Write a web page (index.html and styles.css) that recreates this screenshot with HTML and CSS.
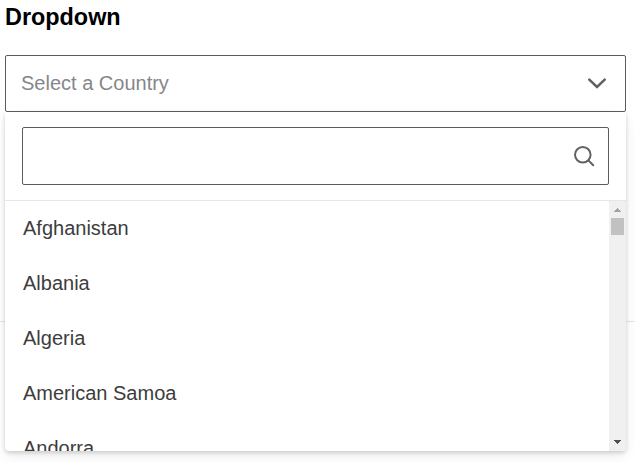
FILE: index.html
```html
<!DOCTYPE html>
<html lang="en">
<head>
<meta charset="utf-8">
<title>Dropdown</title>
<link rel="stylesheet" href="styles.css">
</head>
<body>
<main class="demo">
  <h2 class="title">Dropdown</h2>
  <div class="dropdown">
    <div class="field">
      <span>Select a Country</span>
      <svg class="chevron" width="20" height="12" viewBox="0 0 20 12"><path d="M2.3 1.6L10 9l7.7-7.4"/></svg>
    </div>
    <div class="menu">
      <div class="search-area">
        <div class="search">
          <svg class="magnifier" width="22" height="22" viewBox="0 0 22 22"><circle cx="9.8" cy="9.8" r="7.8"/><path d="M15.4 15.4l4.8 4.8"/></svg>
        </div>
      </div>
      <div class="list">
        <ul class="options">
          <li>Afghanistan</li>
          <li>Albania</li>
          <li>Algeria</li>
          <li>American Samoa</li>
          <li>Andorra</li>
        </ul>
        <div class="scrollbar">
          <div class="scroll-top">
            <svg width="7" height="4" viewBox="0 0 7 4" shape-rendering="crispEdges"><path fill="#a3a3a3" d="M3 0h1v1h1v1h1v1h1v1H0V3h1V2h1V1h1z"/></svg>
            <div class="thumb"></div>
          </div>
          <svg width="7" height="4" viewBox="0 0 7 4" shape-rendering="crispEdges"><path fill="#505050" d="M0 0h7v1H6v1H5v1H4v1H3V3H2V2H1V1H0z"/></svg>
        </div>
      </div>
    </div>
  </div>
</main>
<hr class="rule">
</body>
</html>
```
FILE: styles.css
```css
* { box-sizing: border-box; }
body {
  margin: 0;
  height: 462px;
  overflow: hidden;
  background: #fff;
  font-family: "Liberation Sans", Arial, sans-serif;
}
.demo { height: 321px; padding: 0 9px 0 5px; }
.title {
  margin: 0;
  height: 55px;
  padding-top: 3px;
  font-size: 23.4px;
  line-height: 28px;
  color: #000;
}
.dropdown { position: relative; }
.field {
  display: flex;
  align-items: center;
  justify-content: space-between;
  height: 57px;
  padding: 0 18px 0 15px;
  border: 1px solid #5c5c5e;
  border-radius: 2px;
  font-size: 20px;
  color: #86868a;
}
.chevron, .magnifier { fill: none; stroke: #616161; stroke-width: 2; stroke-linecap: round; }
.chevron { stroke-width: 2.5; }
.menu {
  position: absolute;
  top: 57px;
  left: 0;
  width: 621px;
  height: 339px;
  background: #fff;
  border-radius: 0 0 4px 4px;
  box-shadow: 0 2px 4px rgba(0, 0, 0, .17), 0 6px 16px rgba(0, 0, 0, .06);
}
.search-area { height: 89px; padding: 15px 17px; border-bottom: 1px solid #e6e6e6; }
.search {
  display: flex;
  align-items: center;
  justify-content: flex-end;
  height: 58px;
  padding-right: 13px;
  border: 1px solid #5c5c5e;
  border-radius: 2px;
}
.list {
  display: flex;
  height: 250px;
  overflow: hidden;
  border-radius: 0 0 4px 4px;
}
.options {
  flex: 1;
  margin: 0;
  padding: 0 0 0 18px;
  list-style: none;
  font-size: 20px;
  line-height: 55px;
  color: #3d3d3d;
}
.scrollbar {
  display: flex;
  flex-direction: column;
  justify-content: space-between;
  align-items: center;
  width: 17px;
  padding: 7px 0;
  background: #f0f0f0;
}
.scroll-top { display: flex; flex-direction: column; align-items: center; gap: 6px; }
.scrollbar svg { display: block; }
.thumb { width: 13px; height: 17px; background: #c1c1c1; }
.rule { margin: 0; border: 0; height: 1px; background: #e6e6e6; }
```
